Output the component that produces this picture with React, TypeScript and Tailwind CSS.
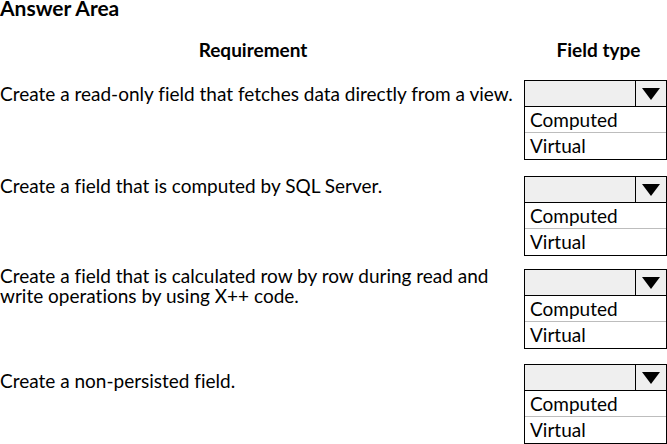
import React from "react";

function Dropdown() {
  return (
    <div className="w-[143px] border border-black bg-white">
      <div className="flex h-[26px] bg-[#efefef] border-b border-black">
        <div className="flex-1" />
        <div className="w-[31px] border-l border-black flex items-center justify-center">
          <svg width="18" height="12" viewBox="0 0 18 12">
            <polygon points="0,0 18,0 9,12" fill="#000" />
          </svg>
        </div>
      </div>
      <div className="h-[26px] pl-[5px] text-[19px] leading-[26px] border-b border-[#bdbdbd]">Computed</div>
      <div className="h-[26px] pl-[5px] text-[19px] leading-[26px]">Virtual</div>
    </div>
  );
}

const rows: { h: string; tp: string; text: React.ReactNode }[] = [
  { h: "h-[96px]", tp: "pt-[8px]", text: "Create a read-only field that fetches data directly from a view." },
  { h: "h-[93px]", tp: "pt-[4px]", text: "Create a field that is computed by SQL Server." },
  {
    h: "h-[95px]",
    tp: "pt-[1px]",
    text: (
      <>
        Create a field that is calculated row by row during read and
        <br />
        write operations by using X++ code.
      </>
    ),
  },
  { h: "h-[84px]", tp: "pt-[11px]", text: "Create a non-persisted field." },
];

export default function App() {
  return (
    <div className="w-[667px] h-[444px] bg-white text-black overflow-hidden font-['Lato',sans-serif] [font-variant-ligatures:none]">
      <div className="h-[20px] text-[21px] leading-[16px] font-bold">Answer Area</div>
      <div className="grid grid-cols-[524px_143px] h-[56px] pt-[20px] text-[19px] leading-[20px] font-bold">
        <div className="text-center pr-[18px]">Requirement</div>
        <div className="text-center pl-[6px]">Field type</div>
      </div>
      {rows.map((r, i) => (
        <div key={i} className={`grid grid-cols-[524px_143px] ${r.h}`}>
          <div className={`${r.tp} text-[19px] leading-[20px] whitespace-nowrap`}>{r.text}</div>
          <div className="pt-[4px]">
            <Dropdown />
          </div>
        </div>
      ))}
    </div>
  );
}
